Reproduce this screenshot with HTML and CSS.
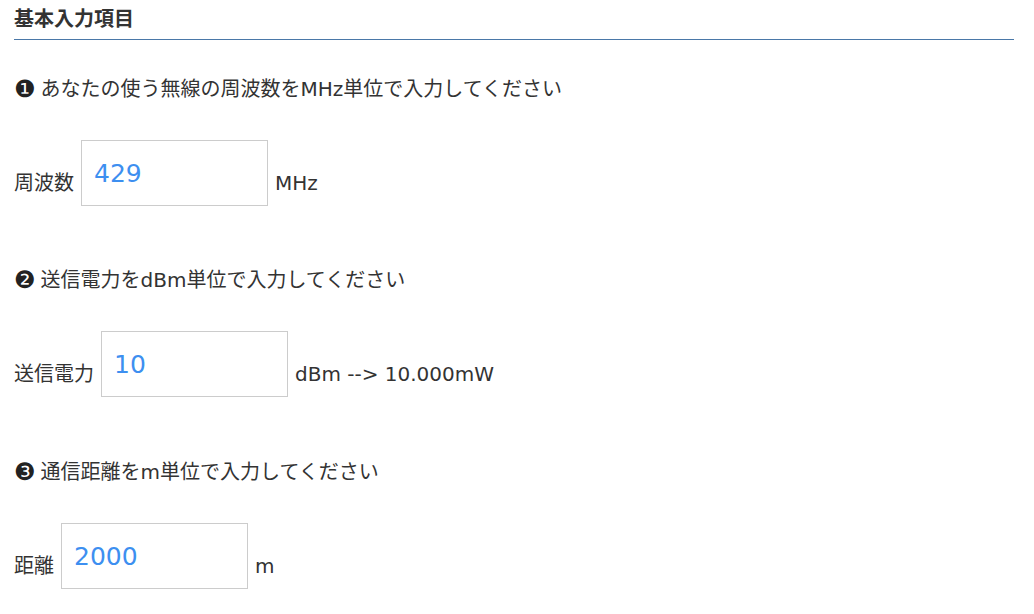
FILE: index.html
```html
<!DOCTYPE html>
<html lang="ja">
<head>
<meta charset="utf-8">
<title>基本入力項目</title>
<link rel="stylesheet" href="styles.css">
</head>
<body>
<div class="page">
  <h2 class="title">基本入力項目</h2>

  <section class="block">
    <p class="question"><span class="num">❶</span>あなたの使う無線の周波数をMHz単位で入力してください</p>
    <div class="row">
      <span class="label">周波数</span>
      <input class="field" type="text" value="429">
      <span class="unit">MHz</span>
    </div>
  </section>

  <section class="block">
    <p class="question"><span class="num">❷</span>送信電力をdBm単位で入力してください</p>
    <div class="row">
      <span class="label">送信電力</span>
      <input class="field" type="text" value="10">
      <span class="unit">dBm --&gt; 10.000mW</span>
    </div>
  </section>

  <section class="block">
    <p class="question"><span class="num">❸</span>通信距離をm単位で入力してください</p>
    <div class="row">
      <span class="label">距離</span>
      <input class="field" type="text" value="2000">
      <span class="unit">m</span>
    </div>
  </section>
</div>
</body>
</html>
```

FILE: styles.css
```css
html, body {
  margin: 0;
  padding: 0;
  background: #ffffff;
}

body {
  font-family: "DejaVu Sans", "Noto Sans CJK JP", sans-serif;
  font-size: 20px;
  color: #333333;
}

.page {
  width: 1000px;
  margin-left: 14px;
  padding-top: 3px;
}

.title {
  margin: 0;
  font-family: "Noto Sans CJK JP", sans-serif;
  font-size: 20px;
  font-weight: 700;
  line-height: 30px;
  padding-bottom: 6px;
  border-bottom: 1px solid #4a78a8;
  color: #333333;
}

.block {
  margin-top: 34px;
}

.block + .block {
  margin-top: 59px;
}

.block:last-child {
  margin-top: 60px;
}

.question {
  margin: 0;
  line-height: 30px;
  height: 30px;
  white-space: nowrap;
}

.num {
  display: inline-block;
  font-size: 24px;
  line-height: 30px;
  vertical-align: top;
  color: #222222;
  margin-right: 5px;
}

.row {
  display: flex;
  align-items: flex-end;
  gap: 7px;
  margin-top: 36px;
}

.label,
.unit {
  line-height: 30px;
  padding-bottom: 8px;
  white-space: nowrap;
}

.field {
  box-sizing: border-box;
  width: 187px;
  height: 66px;
  margin: 0;
  padding: 0 12px;
  border: 1px solid #cccccc;
  border-radius: 0;
  background: #ffffff;
  font-family: "DejaVu Sans", sans-serif;
  font-size: 25px;
  color: #3d8ff0;
  outline: none;
}
```
